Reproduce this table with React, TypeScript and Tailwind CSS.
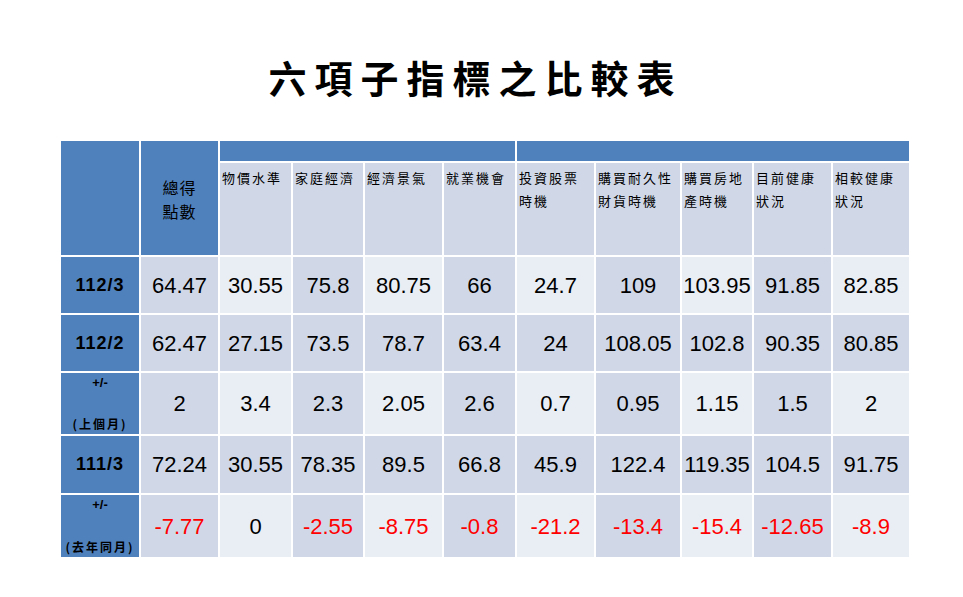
const heads = [
  ['物價水準'],
  ['家庭經濟'],
  ['經濟景氣'],
  ['就業機會'],
  ['投資股票', '時機'],
  ['購買耐久性', '財貨時機'],
  ['購買房地', '產時機'],
  ['目前健康', '狀況'],
  ['相較健康', '狀況'],
];

type Row = {
  label: string[];
  values: string[];
  banded: boolean;
  red?: boolean;
};

const rows: Row[] = [
  {
    label: ['112/3'],
    values: ['64.47', '30.55', '75.8', '80.75', '66', '24.7', '109', '103.95', '91.85', '82.85'],
    banded: false,
  },
  {
    label: ['112/2'],
    values: ['62.47', '27.15', '73.5', '78.7', '63.4', '24', '108.05', '102.8', '90.35', '80.85'],
    banded: true,
  },
  {
    label: ['+/-', '(上個月)'],
    values: ['2', '3.4', '2.3', '2.05', '2.6', '0.7', '0.95', '1.15', '1.5', '2'],
    banded: false,
  },
  {
    label: ['111/3'],
    values: ['72.24', '30.55', '78.35', '89.5', '66.8', '45.9', '122.4', '119.35', '104.5', '91.75'],
    banded: true,
  },
  {
    label: ['+/-', '(去年同月)'],
    values: ['-7.77', '0', '-2.55', '-8.75', '-0.8', '-21.2', '-13.4', '-15.4', '-12.65', '-8.9'],
    banded: false,
    red: true,
  },
];

const cjk = { fontFamily: '"Noto Sans CJK TC", "Noto Sans", sans-serif' };
const arial = { fontFamily: '"Liberation Sans", Arial, sans-serif' };

function RowLabel({ label }: { label: string[] }) {
  if (label.length === 1) {
    return (
      <div
        className="flex items-center justify-center bg-[#4f81bd] text-[18px] font-bold tracking-[1px] text-black"
        style={arial}
      >
        {label[0]}
      </div>
    );
  }
  return (
    <div className="flex flex-col items-center justify-between bg-[#4f81bd] pt-[1px] pb-[1px] text-black">
      <span className="text-[13px] font-bold leading-[18px]" style={arial}>
        {label[0]}
      </span>
      <span className="text-[12px] font-bold leading-[18px] tracking-[2px]" style={cjk}>
        {label[1]}
      </span>
    </div>
  );
}

export default function App() {
  return (
    <div className="flex h-[597px] w-[963px] flex-col bg-white">
      {/* Title */}
      <div
        className="flex h-[48px] items-center justify-center pr-[12px] mt-[53px] text-[38px] font-semibold leading-[48px] tracking-[8px] text-black"
        style={cjk}
      >
        六項子指標之比較表
      </div>

      {/* Table */}
      <div className="ml-[61px] mt-[40px] grid grid-cols-[78px_77px_71px_70px_77px_71px_77px_84px_70px_77px_76px] grid-rows-[20px_92px_56px_56px_61px_57px_62px] gap-[2px]">
        <div className="col-start-1 row-span-2 row-start-1 bg-[#4f81bd]" />
        <div
          className="col-start-2 row-span-2 row-start-1 flex flex-col items-center justify-center bg-[#4f81bd] pt-[2px] text-[16px] leading-[24px] tracking-[1px] text-black"
          style={cjk}
        >
          <span>總得</span>
          <span>點數</span>
        </div>
        <div className="col-span-4 col-start-3 row-start-1 bg-[#4f81bd]" />
        <div className="col-span-5 col-start-7 row-start-1 bg-[#4f81bd]" />

        {heads.map((lines, i) => (
          <div
            key={lines.join('')}
            className="row-start-2 flex flex-col bg-[#d0d8e8] pl-[2px] pt-[3px] text-[13px] leading-[23px] tracking-[2px] text-black"
            style={{ ...cjk, gridColumnStart: i + 3 }}
          >
            {lines.map((l) => (
              <span key={l} className="whitespace-nowrap">
                {l}
              </span>
            ))}
          </div>
        ))}

        {rows.map((row) => (
          <div key={row.label.join('')} className="contents">
            <RowLabel label={row.label} />
            {row.values.map((v, i) => {
              const dark = row.banded || i % 2 === 0;
              const neg = row.red && v.startsWith('-');
              return (
                <div
                  key={i}
                  className={`flex items-center justify-center whitespace-nowrap text-[22px] ${
                    dark ? 'bg-[#d0d8e8]' : 'bg-[#e9edf4]'
                  } ${neg ? 'text-[#ff0000]' : 'text-black'}`}
                  style={arial}
                >
                  {v}
                </div>
              );
            })}
          </div>
        ))}
      </div>
    </div>
  );
}
